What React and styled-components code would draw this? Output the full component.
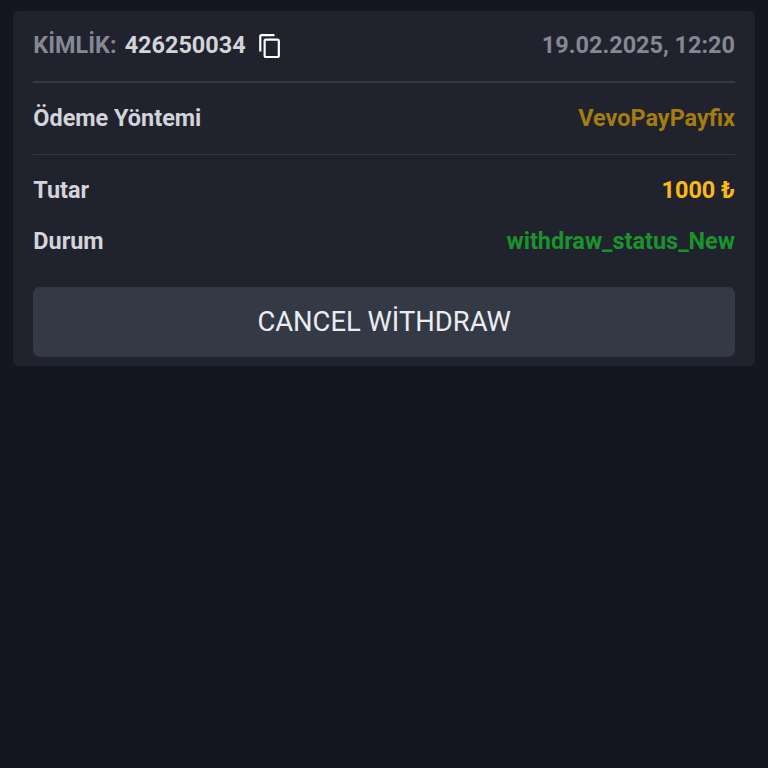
import React from "react";
import styled, { createGlobalStyle } from "styled-components";
import { MdContentCopy } from "react-icons/md";

const GlobalStyle = createGlobalStyle`
  * {
    box-sizing: border-box;
  }

  body {
    margin: 0;
    background-color: #141621;
    font-family: Roboto, "Noto Sans", sans-serif;
  }
`;

const App = () => {
  return (
    <>
      <GlobalStyle />
      <Card>
        <Row $height="72px" $divider="2px" $lift="2px">
          <Label>
            <Muted>KİMLİK:</Muted> 426250034
            <CopyButton aria-label="copy">
              <MdContentCopy />
            </CopyButton>
          </Label>
          <Value $color="#858893">19.02.2025, 12:20</Value>
        </Row>
        <Row $height="72px" $divider="1px">
          <Label>Ödeme Yöntemi</Label>
          <Value $color="#a57c0e">VevoPayPayfix</Value>
        </Row>
        <Row $height="70px">
          <Label>Tutar</Label>
          <Value $color="#fdb913">1000 ₺</Value>
        </Row>
        <Row $height="33px">
          <Label>Durum</Label>
          <Value $color="#1a932c">withdraw_status_New</Value>
        </Row>
        <CancelButton>CANCEL WİTHDRAW</CancelButton>
      </Card>
    </>
  );
};

const Card = styled.div`
  margin: 10.5px 13px 0 13.3px;
  padding: 0 20px 9px;
  height: 355.5px;
  border-radius: 6px;
  background-color: #20232e;
`;

const Row = styled.div`
  display: flex;
  align-items: center;
  justify-content: space-between;
  height: ${({ $height }) => $height};
  padding-bottom: ${({ $lift }) => $lift || 0};
  border-bottom: ${({ $divider }) => ($divider ? `${$divider} solid #353842` : "none")};
  font-size: 23.45px;
  font-weight: 700;
`;

const Label = styled.div`
  display: flex;
  align-items: center;
  color: #d3d4da;
`;

const Muted = styled.span`
  margin-right: 8px;
  color: #858893;
`;

const Value = styled.span`
  color: ${({ $color }) => $color};
`;

const CopyButton = styled.button`
  display: flex;
  margin: 3px 0 0 11px;
  padding: 0;
  border: none;
  background: none;
  color: #fff;
  font-size: 26.2px;
`;

const CancelButton = styled.button`
  display: block;
  width: 100%;
  height: 70px;
  margin-top: 29px;
  border: none;
  border-radius: 7px;
  background-color: #343a45;
  color: #ebecf2;
  font-family: inherit;
  font-size: 27.4px;
`;

export default App;
